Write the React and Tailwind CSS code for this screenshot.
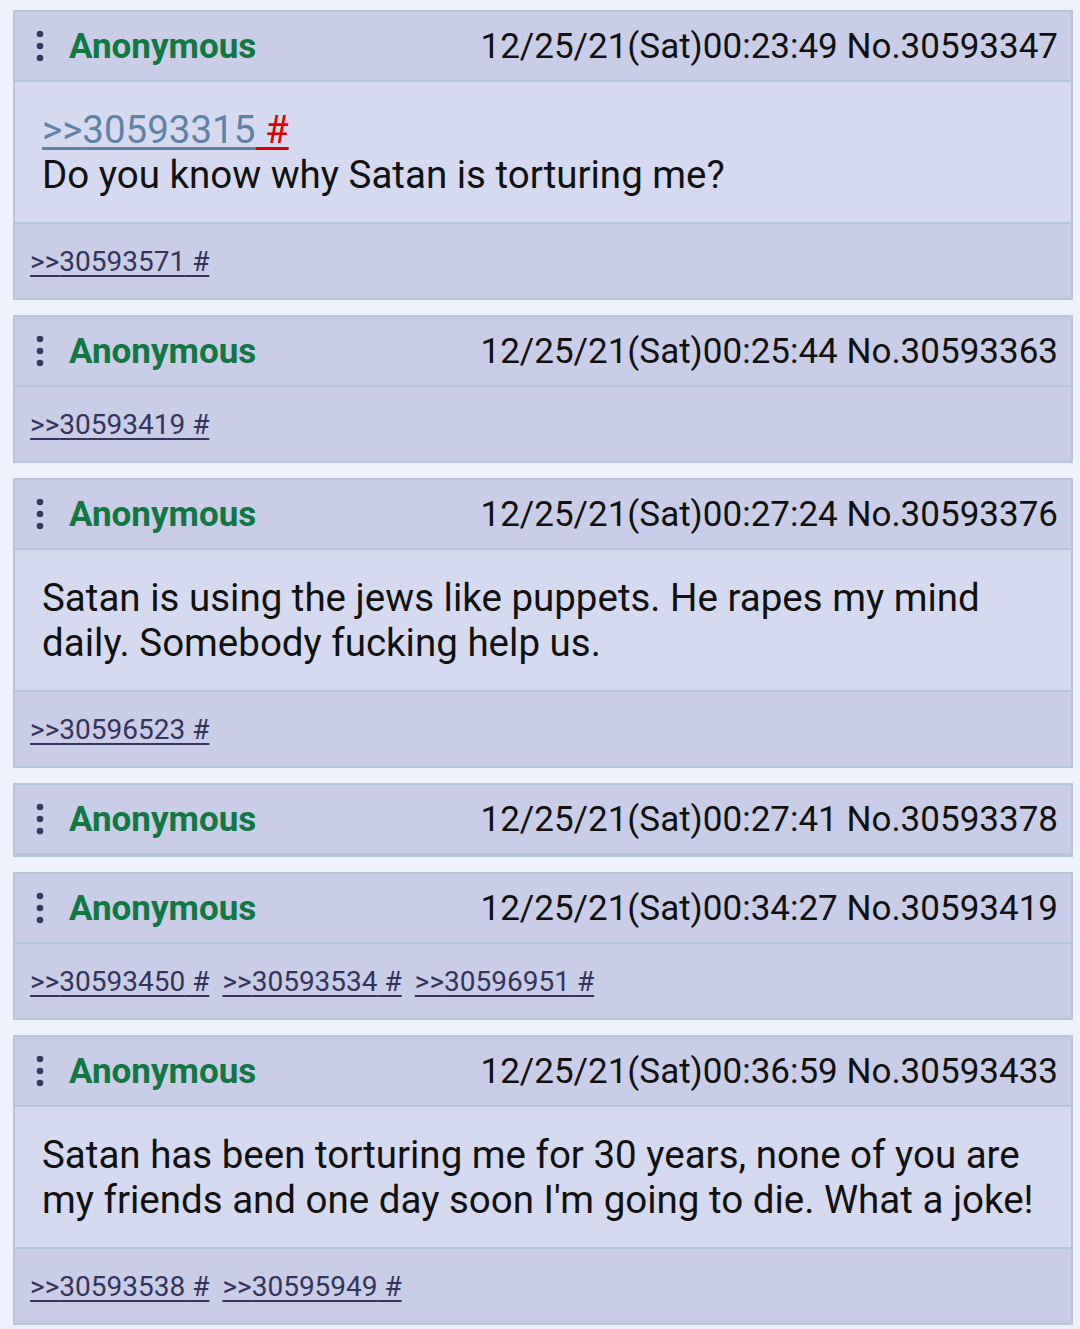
import React from "react";

const posts = [
  {
    date: "12/25/21(Sat)00:23:49 No.30593347",
    quote: "30593315",
    lines: "Do you know why Satan is torturing me?",
    replies: ["30593571"],
  },
  { date: "12/25/21(Sat)00:25:44 No.30593363", replies: ["30593419"] },
  {
    date: "12/25/21(Sat)00:27:24 No.30593376",
    lines: "Satan is using the jews like puppets. He rapes my mind daily. Somebody fucking help us.",
    replies: ["30596523"],
  },
  { date: "12/25/21(Sat)00:27:41 No.30593378", replies: [] },
  {
    date: "12/25/21(Sat)00:34:27 No.30593419",
    replies: ["30593450", "30593534", "30596951"],
  },
  {
    date: "12/25/21(Sat)00:36:59 No.30593433",
    lines:
      "Satan has been torturing me for 30 years, none of you are my friends and one day soon I'm going to die. What a joke!",
    replies: ["30593538", "30595949"],
  },
];

function Dots() {
  return (
    <svg width="8" height="32" viewBox="0 0 8 32" className="shrink-0">
      <circle cx="4" cy="4" r="3.3" fill="#353a63" />
      <circle cx="4" cy="16" r="3.3" fill="#353a63" />
      <circle cx="4" cy="28" r="3.3" fill="#353a63" />
    </svg>
  );
}

function Post({ p }) {
  return (
    <div className="border-2 border-[#b7c5d9] bg-[#d6daf0]">
      <div className="flex h-[70px] items-center justify-between border-b-2 border-[#b7c5d9] bg-[#c9cde8] pl-[21px] pr-[13px]">
        <div className="flex items-center gap-[25px]">
          <Dots />
          <span className="text-[35px] font-bold leading-none text-[#117743]">Anonymous</span>
        </div>
        <span className="text-[35px] leading-none text-[#111111]">{p.date}</span>
      </div>
      {p.lines && (
        <div className="border-b-2 border-[#b7c5d9] bg-[#d6daf0] pl-[27px] pr-[20px] pb-[25px] pt-[25px] text-[38.5px] leading-[45px] text-[#111111]">
          {p.quote && (
            <div>
              <span className="text-[#5f83a8] underline decoration-[2.5px] underline-offset-[4px]">
                &gt;&gt;{p.quote}
              </span>
              <span className="text-[#dd0000] underline decoration-[2.5px] underline-offset-[4px]">
                {" "}#
              </span>
            </div>
          )}
          <div>{p.lines}</div>
        </div>
      )}
      {p.replies.length > 0 && (
        <div className="flex h-[74px] items-center gap-[13px] bg-[#c9cde8] pl-[15px] pt-[2px] text-[28px] leading-none text-[#34345c]">
          {p.replies.map((r) => (
            <span key={r} className="underline decoration-2 underline-offset-[4px]">
              &gt;&gt;{r} #
            </span>
          ))}
        </div>
      )}
    </div>
  );
}

export default function App() {
  return (
    <div
      className="min-h-[1329px] w-[1080px] bg-[#eef2fd] pl-[13px] pr-[7px] pt-[10px]"
      style={{ fontFamily: "Roboto, 'Noto Sans', sans-serif" }}
    >
      <div className="flex flex-col gap-[15px]">
        {posts.map((p, i) => (
          <Post key={i} p={p} />
        ))}
      </div>
    </div>
  );
}
